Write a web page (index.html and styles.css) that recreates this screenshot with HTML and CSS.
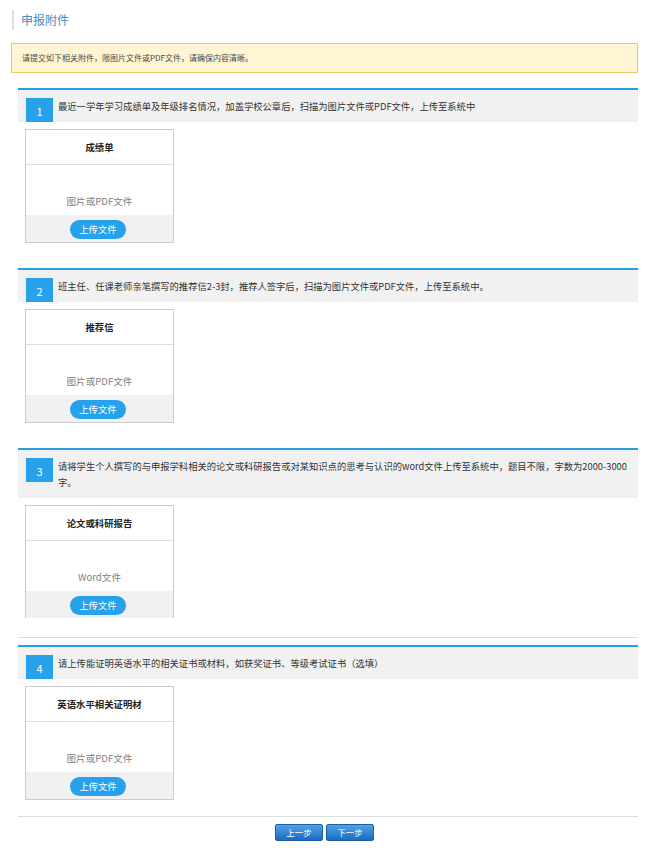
FILE: index.html
```html
<!DOCTYPE html>
<html lang="zh-CN">
<head>
  <meta charset="UTF-8" />
  <title>申报附件</title>
  <meta name="viewport" content="width=device-width, initial-scale=1.0" />
  <link rel="stylesheet" href="styles.css">
</head>
<body>
  <div class="page">
    <div class="page-title">申报附件</div>

    <div class="notice">请提交如下相关附件，限图片文件或PDF文件，请确保内容清晰。</div>

    <div class="sections">
      <div class="section">
        <div class="section-head">
          <span class="section-num">1</span>
          <p class="section-desc">最近一学年学习成绩单及年级排名情况，加盖学校公章后，扫描为图片文件或PDF文件，上传至系统中</p>
        </div>
        <div class="upload-card">
          <div class="upload-name">成绩单</div>
          <div class="upload-type">图片或PDF文件</div>
          <div class="upload-foot"><button class="upload-btn">上传文件</button></div>
        </div>
      </div>

      <div class="section">
        <div class="section-head">
          <span class="section-num">2</span>
          <p class="section-desc">班主任、任课老师亲笔撰写的推荐信2-3封，推荐人签字后，扫描为图片文件或PDF文件，上传至系统中。</p>
        </div>
        <div class="upload-card">
          <div class="upload-name">推荐信</div>
          <div class="upload-type">图片或PDF文件</div>
          <div class="upload-foot"><button class="upload-btn">上传文件</button></div>
        </div>
      </div>

      <div class="section">
        <div class="section-head">
          <span class="section-num">3</span>
          <p class="section-desc">请将学生个人撰写的与申报学科相关的论文或科研报告或对某知识点的思考与认识的word文件上传至系统中，题目不限，字数为2000-3000字。</p>
        </div>
        <div class="upload-card">
          <div class="upload-name">论文或科研报告</div>
          <div class="upload-type">Word文件</div>
          <div class="upload-foot"><button class="upload-btn">上传文件</button></div>
        </div>
      </div>

      <hr class="divider divider-top" />

      <div class="section section-auto">
        <div class="section-head">
          <span class="section-num">4</span>
          <p class="section-desc">请上传能证明英语水平的相关证书或材料，如获奖证书、等级考试证书（选填）</p>
        </div>
        <div class="upload-card">
          <div class="upload-name">英语水平相关证明材</div>
          <div class="upload-type">图片或PDF文件</div>
          <div class="upload-foot"><button class="upload-btn">上传文件</button></div>
        </div>
      </div>

      <hr class="divider" />

      <div class="step-bar">
        <button class="step-btn">上一步</button>
        <button class="step-btn">下一步</button>
      </div>
    </div>
  </div>
</body>
</html>
```

FILE: styles.css
```css
* {
  box-sizing: border-box;
}

html, body {
  margin: 0;
  padding: 0;
  background: #ffffff;
  font-family: "Noto Sans CJK SC", "Noto Sans", sans-serif;
  color: #333333;
}

.page {
  padding: 10px 11px 0 11px;
}

.page-title {
  margin-left: 1px;
  height: 20px;
  line-height: 20px;
  padding-left: 7px;
  border-left: 2px solid #dddddd;
  font-size: 12px;
  color: #3f8dc6;
}

.notice {
  margin-top: 13px;
  height: 30px;
  line-height: 28px;
  padding: 0 10px;
  background: #fff5d2;
  border: 1px solid #efc865;
  font-size: 8px;
  color: #4a4a4a;
}

.sections {
  margin: 15px 0 0 7px;
}

.section {
  height: 170px;
  overflow: hidden;
  border-top: 2px solid #2a9de2;
  margin-bottom: 10px;
}

.section-auto {
  height: auto;
  overflow: visible;
  padding-bottom: 16px;
  margin-bottom: 0;
}

.section-head {
  display: flex;
  align-items: flex-start;
  gap: 5px;
  padding: 8px 0 0 8px;
  background: #f1f1f1;
}

.section-num {
  flex: 0 0 27px;
  height: 24px;
  line-height: 26px;
  text-align: center;
  background: #27a2ea;
  color: #ffffff;
  font-size: 11px;
}

.section-desc {
  margin: 0;
  padding-bottom: 8px;
  font-size: 9.3px;
  line-height: 16px;
  color: #333333;
}

.upload-card {
  width: 149px;
  margin: 7px 0 0 7px;
  border: 1px solid #cccccc;
  background: #ffffff;
}

.upload-name {
  height: 35px;
  line-height: 34px;
  text-align: center;
  font-size: 9.4px;
  font-weight: bold;
  color: #222222;
  border-bottom: 1px solid #dddddd;
}

.upload-type {
  height: 50px;
  padding-top: 29px;
  line-height: 14px;
  text-align: center;
  font-size: 9.6px;
  color: #808080;
}

.upload-foot {
  display: flex;
  justify-content: center;
  align-items: flex-start;
  height: 27px;
  padding: 5px 3px 0 0;
  background: #f1f1f1;
}

.upload-btn {
  display: block;
  width: 56px;
  height: 19px;
  padding: 0;
  border: none;
  border-radius: 10px;
  background: #27a2ea;
  color: #ffffff;
  font-family: inherit;
  font-size: 9.4px;
  line-height: 19px;
  cursor: pointer;
}

.divider {
  border: none;
  height: 1px;
  background: #dddddd;
  margin: 0;
}

.divider-top {
  margin: 19px 0 7px;
}

.step-bar {
  display: flex;
  justify-content: center;
  gap: 3px;
  margin-top: 7px;
  padding-right: 7px;
}

.step-btn {
  width: 48px;
  height: 17px;
  padding: 0;
  border: 1px solid #1b5fa6;
  border-radius: 2px;
  background: linear-gradient(#4fa2e8, #1d6bbd);
  color: #ffffff;
  font-family: inherit;
  font-size: 8.5px;
  line-height: 15px;
  cursor: pointer;
}
```
